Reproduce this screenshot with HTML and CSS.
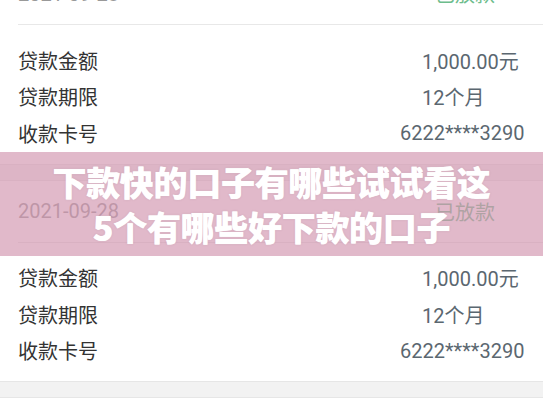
FILE: index.html
```html
<!DOCTYPE html>
<html lang="zh-CN">
<head>
    <meta charset="UTF-8">
    <meta name="viewport" content="width=device-width, initial-scale=1.0">
    <title>借款记录</title>
    <link rel="stylesheet" href="styles.css">
</head>
<body>
    <div class="record-list">
        <div class="record-card">
            <div class="record-head">
                <span class="record-date">2021-09-28</span>
                <span class="record-status">已放款</span>
            </div>
            <div class="record-body">
                <div class="record-row"><span class="label">贷款金额</span><span class="value">1,000.00元</span></div>
                <div class="record-row"><span class="label">贷款期限</span><span class="value">12个月</span></div>
                <div class="record-row"><span class="label">收款卡号</span><span class="value value-wide">6222****3290</span></div>
            </div>
        </div>
        <div class="record-card">
            <div class="record-head">
                <span class="record-date">2021-09-28</span>
                <span class="record-status">已放款</span>
            </div>
            <div class="record-body">
                <div class="record-row"><span class="label">贷款金额</span><span class="value">1,000.00元</span></div>
                <div class="record-row"><span class="label">贷款期限</span><span class="value">12个月</span></div>
                <div class="record-row"><span class="label">收款卡号</span><span class="value value-wide">6222****3290</span></div>
            </div>
        </div>
        <div class="record-card"></div>
    </div>

    <!-- title banner over the list -->
    <div class="banner">
        <h1>下款快的口子有哪些试试看这<br>5个有哪些好下款的口子</h1>
    </div>
</body>
</html>
```

FILE: styles.css
```css
body {
    margin: 0;
    background: #fff;
    font-family: Roboto, "Noto Sans CJK SC", sans-serif;
    overflow: hidden;
}

.record-list {
    margin-top: -38px;
    display: flex;
    flex-direction: column;
    gap: 15px;
    background: #f2f2f2;
}

.record-card {
    background: #fff;
    border-top: 1px solid #e6e6e6;
    border-bottom: 1px solid #e6e6e6;
    min-height: 40px;
}

.record-head {
    margin-left: 18px;
    height: 61px;
    padding-right: 48px;
    display: flex;
    align-items: center;
    justify-content: space-between;
    border-bottom: 1px solid #e8e8e8;
    font-size: 20px;
}

.record-date {
    color: #999;
}

.record-status {
    color: #6dbd8c;
}

.record-body {
    padding: 17px 0 12px;
}

.record-row {
    height: 36.5px;
    display: flex;
    align-items: center;
    padding-left: 18px;
    font-size: 20px;
}

.label {
    color: #333;
    width: 404px;
}

.value {
    color: #5b6770;
}

.value-wide {
    margin-left: -22px;
}

.banner {
    position: absolute;
    left: 0;
    right: 0;
    top: 152px;
    height: 104px;
    background: rgba(210, 148, 175, 0.66);
    display: flex;
    align-items: center;
    justify-content: center;
}

.banner h1 {
    margin: 0;
    color: #fff;
    font-family: "Noto Sans CJK SC", sans-serif;
    font-weight: 900;
    font-size: 34px;
    line-height: 45px;
    text-align: center;
    letter-spacing: -0.3px;
    text-shadow: 0 0 1px #fff, 0 0 2px rgba(150, 90, 115, 0.4);
}
```
